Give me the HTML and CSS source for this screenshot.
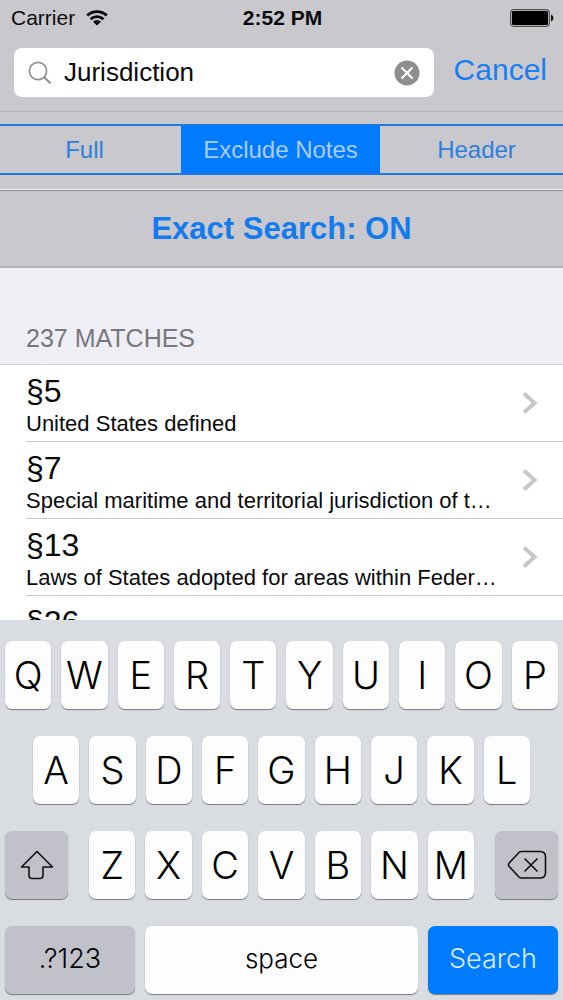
FILE: index.html
```html
<!DOCTYPE html>
<html lang="en">
<head>
<meta charset="utf-8">
<meta name="viewport" content="width=device-width, initial-scale=1">
<title>Search</title>
<link rel="stylesheet" href="styles.css">
</head>
<body>
<div class="app">
  <header class="top">
    <div class="status">
      <span class="carrier">Carrier
        <svg class="wifi" width="22" height="16" viewBox="0 0 22 16" aria-hidden="true">
          <path d="M1.2 5.6a14 14 0 0 1 19.6 0M4.6 9.2a9.2 9.2 0 0 1 12.8 0" fill="none" stroke="#08080c" stroke-width="2.8"/>
          <path d="M11 15.6 7 11.7a5.8 5.8 0 0 1 8 0z" fill="#08080c"/>
        </svg>
      </span>
      <span class="time">2:52 PM</span>
      <svg class="battery" width="44" height="18" viewBox="0 0 44 18" aria-label="Battery full">
        <rect x=".7" y=".7" width="38.6" height="16.6" rx="2.5" fill="none" stroke="#333" stroke-width="1"/>
        <rect x="2" y="2" width="36" height="14" rx="1.2" fill="#000"/>
        <path d="M41 5.5q2.5 1 2.5 3.5T41 12.500z" fill="#111"/>
      </svg>
    </div>
    <form class="search">
      <div class="field">
        <svg width="24" height="24" viewBox="0 0 24 24" aria-hidden="true">
          <circle cx="10" cy="10" r="8.600" fill="none" stroke="#8e8e93" stroke-width="1.600"/>
          <path d="M16 16l6.500 6.500" stroke="#8e8e93" stroke-width="2"/>
        </svg>
        <input class="query" type="text" value="Jurisdiction" aria-label="Search">
        <button class="clear" type="button" aria-label="Clear text">
          <svg width="26" height="26" viewBox="0 0 26 26" aria-hidden="true">
            <circle cx="13" cy="13" r="12.500" fill="#8e8e90"/>
            <path d="M7.500 7.500l11 11M18.500 7.500l-11 11" stroke="#fff" stroke-width="2.200"/>
          </svg>
        </button>
      </div>
      <button class="cancel" type="button">Cancel</button>
    </form>
    <div class="scope">
      <div class="segments" role="group" aria-label="Scope">
        <button type="button" class="segment">Full</button>
        <button type="button" class="segment selected" aria-pressed="true">Exclude Notes</button>
        <button type="button" class="segment">Header</button>
      </div>
    </div>
    <button type="button" class="exact">Exact Search: ON</button>
  </header>

  <main class="results">
    <h2 class="count">237 MATCHES</h2>
    <ul class="list">
      <li class="item"><a class="row" href="#s5"><span class="text"><span class="section">§5</span><span class="title">United States defined</span></span><svg class="chevron" width="16" height="22" viewBox="0 0 16 22" aria-hidden="true"><path d="M2 1.500l10.500 9.500-10.500 9.500" fill="none" stroke="#c7c7c9" stroke-width="4"/></svg></a></li>
      <li class="item"><a class="row" href="#s7"><span class="text"><span class="section">§7</span><span class="title">Special maritime and territorial jurisdiction of the United States defined</span></span><svg class="chevron" width="16" height="22" viewBox="0 0 16 22" aria-hidden="true"><path d="M2 1.500l10.500 9.500-10.500 9.500" fill="none" stroke="#c7c7c9" stroke-width="4"/></svg></a></li>
      <li class="item"><a class="row" href="#s13"><span class="text"><span class="section">§13</span><span class="title">Laws of States adopted for areas within Federal jurisdiction</span></span><svg class="chevron" width="16" height="22" viewBox="0 0 16 22" aria-hidden="true"><path d="M2 1.500l10.500 9.500-10.500 9.500" fill="none" stroke="#c7c7c9" stroke-width="4"/></svg></a></li>
      <li class="item"><a class="row" href="#s26"><span class="text"><span class="section">§26</span></span></a></li>
    </ul>
  </main>

  <div class="keyboard" role="group" aria-label="Keyboard">
    <div class="keys">
      <button class="key">Q</button><button class="key">W</button><button class="key">E</button><button class="key">R</button><button class="key">T</button><button class="key">Y</button><button class="key">U</button><button class="key">I</button><button class="key">O</button><button class="key">P</button>
    </div>
    <div class="keys inset">
      <button class="key">A</button><button class="key">S</button><button class="key">D</button><button class="key">F</button><button class="key">G</button><button class="key">H</button><button class="key">J</button><button class="key">K</button><button class="key">L</button>
    </div>
    <div class="keys spread">
      <button class="key dark side" aria-label="Shift">
        <svg width="34" height="30" viewBox="0 0 34 30" aria-hidden="true"><path d="M17 1.500 1.500 17H9v8.500q0 3 3 3h8q3 0 3-3V17h9.500z" fill="none" stroke="#111" stroke-width="1.600" stroke-linejoin="round"/></svg>
      </button>
      <div class="keys letters">
        <button class="key">Z</button><button class="key">X</button><button class="key">C</button><button class="key">V</button><button class="key">B</button><button class="key">N</button><button class="key">M</button>
      </div>
      <button class="key dark side" aria-label="Delete">
        <svg width="40" height="30" viewBox="0 0 40 30" aria-hidden="true"><path d="M14.500 1.500H33q5.500 0 5.500 5.500v15.500q0 5.500-5.500 5.500H14.500q-1.500 0-2.500-1L2.200 16.500q-1.500-1.700 0-3.500L12 2.500q1-1 2.500-1zM17.500 8.500l13 13M30.500 8.500l-13 13" fill="none" stroke="#111" stroke-width="1.600"/></svg>
      </button>
    </div>
    <div class="keys">
      <button class="key dark word wide">.?123</button>
      <button class="key word space">space</button>
      <button class="key blue word wide">Search</button>
    </div>
  </div>
</div>
</body>
</html>
```
FILE: styles.css
```css
* {
  box-sizing: border-box;
}

body {
  margin: 0;
  font-family: "Liberation Sans", Arial, sans-serif;
  color: #0a0a0c;
}

button,
input {
  margin: 0;
  padding: 0;
  border: 0;
  background: none;
  font: inherit;
  color: inherit;
}

svg {
  display: block;
  flex: none;
}

.app {
  display: flex;
  flex-direction: column;
  height: 100vh;
  overflow: hidden;
}

.top {
  flex: none;
  background: #c9c8cd;
}

.status {
  display: grid;
  grid-template-columns: 1fr auto 1fr;
  align-items: center;
  height: 36px;
  padding: 0 9px 0 11px;
  font-size: 21px;
}

.carrier {
  display: flex;
  align-items: center;
  gap: 11px;
}

.time {
  font-weight: bold;
}

.battery {
  justify-self: end;
}

.search {
  display: flex;
  align-items: center;
  gap: 20px;
  height: 76px;
  padding: 0 16px 2px 14px;
  border-bottom: 1px solid #b4b4b9;
}

.field {
  display: flex;
  align-items: center;
  flex: 1;
  gap: 12px;
  min-width: 0;
  height: 49px;
  padding: 0 14px;
  border-radius: 8px;
  background: #fff;
}

.query {
  flex: 1;
  min-width: 0;
  font-size: 26px;
  outline: 0;
}

.cancel {
  padding-bottom: 6px;
  font-size: 30px;
  color: #1a7df0;
}

.scope {
  height: 78px;
  padding-top: 12px;
  border-bottom: 1px solid #f4f4f6;
  overflow: hidden;
}

.segments {
  display: grid;
  grid-template-columns: 1fr 199px 1fr;
  height: 51px;
  margin: 0 -12px 0 -14px;
  border: 2px solid #1f79dc;
}

.segment {
  font-size: 24px;
  color: #2e80dc;
}

.selected {
  background: #007aff;
  color: #a9cdf5;
}

.exact {
  display: block;
  width: 100%;
  height: 78px;
  border-top: 1px solid #8e8e93;
  border-bottom: 2px solid #b4b4b9;
  font-size: 31px;
  font-weight: bold;
  color: #147bec;
}

.results {
  flex: 1;
  min-height: 0;
  overflow: hidden;
  background: #fff;
}

.count {
  height: 97px;
  margin: 0;
  padding: 56px 26px 0;
  border-bottom: 1px solid #d2d1d6;
  background: #efeef4;
  font-size: 25px;
  font-weight: normal;
  line-height: 28px;
  color: #77777c;
}

.list {
  margin: 0;
  padding: 0 0 0 26px;
  list-style: none;
}

.row {
  display: flex;
  align-items: center;
  gap: 21px;
  height: 77px;
  padding-right: 25px;
  border-bottom: 1px solid #c8c7cc;
  color: inherit;
  text-decoration: none;
}

.text {
  flex: 1;
  align-self: flex-start;
  min-width: 0;
  padding-top: 7px;
}

.section,
.title {
  display: block;
  overflow: hidden;
  white-space: nowrap;
  text-overflow: ellipsis;
}

.section {
  font-size: 32px;
  line-height: 38px;
}

.title {
  font-size: 22px;
  line-height: 28px;
}

.keyboard {
  display: flex;
  flex: none;
  flex-direction: column;
  gap: 27px;
  padding: 21px 5px 6px;
  background: #d9dce0;
}

.keys {
  display: flex;
  gap: 10px;
}

.inset {
  padding: 0 28px;
}

.spread {
  gap: 21px;
}

.letters {
  flex: 1;
}

.key {
  display: flex;
  align-items: center;
  justify-content: center;
  flex: 1;
  min-width: 0;
  height: 68px;
  border-radius: 7px;
  background: #fdfdfe;
  box-shadow: 0 1px 1px #77797e;
  font-family: Inter, "Liberation Sans", sans-serif;
  font-size: 38px;
  font-weight: 300;
  color: #000;
}

.dark {
  background: #c1c2c9;
}

.side {
  flex: 0 0 63px;
}

.word {
  padding-bottom: 4px;
  font-size: 27px;
}

.space {
  font-size: 26px;
}

.wide {
  flex: 0 0 130px;
}

.blue {
  background: #007aff;
  color: #d6ebff;
}
```
